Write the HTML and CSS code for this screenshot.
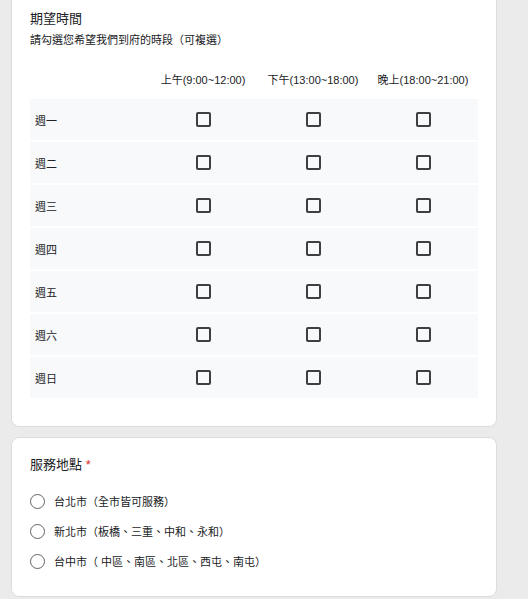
FILE: index.html
```html
<!DOCTYPE html>
<html lang="zh-Hant">
  <head>
    <meta charset="UTF-8" />
    <meta name="viewport" content="width=device-width, initial-scale=1.0" />
    <title>預約表單</title>
    <link rel="stylesheet" href="styles.css">
  </head>
  <body>
    <div class="form">
      <div class="card card-top">
        <div class="q-title">期望時間</div>
        <div class="q-desc">請勾選您希望我們到府的時段（可複選）</div>
        <div class="grid">
          <div class="head"></div>
          <div class="head">上午(9:00~12:00)</div>
          <div class="head">下午(13:00~18:00)</div>
          <div class="head">晚上(18:00~21:00)</div>
        </div>
        <div class="rows" id="rows"></div>
      </div>

      <div class="card card-place">
        <div class="q-title">服務地點 <span class="req">*</span></div>
        <div class="options">
          <label class="option"><span class="radio"></span>台北市（全市皆可服務）</label>
          <label class="option"><span class="radio"></span>新北市（板橋、三重、中和、永和）</label>
          <label class="option"><span class="radio"></span>台中市（ 中區、南區、北區、西屯、南屯）</label>
        </div>
      </div>
    </div>

    <script>
      const days = ["週一", "週二", "週三", "週四", "週五", "週六", "週日"];
      const rows = document.getElementById("rows");
      days.forEach((day) => {
        const row = document.createElement("div");
        row.className = "grid row";
        row.innerHTML = `
          <div class="day">${day}</div>
          <div class="cell"><span class="box"></span></div>
          <div class="cell"><span class="box"></span></div>
          <div class="cell"><span class="box"></span></div>
        `;
        rows.appendChild(row);
      });
    </script>
  </body>
</html>
```

FILE: styles.css
```css
body {
  margin: 0;
  background: #ebebeb;
  font-family: "Liberation Sans", "Noto Sans CJK TC", sans-serif;
  color: #202124;
}
.form {
  width: 486px;
  margin-left: 11px;
}
.card {
  background: #fff;
  border: 1px solid #dadce0;
  border-radius: 8px;
  padding: 0 18px;
}
.card-top {
  border-top: none;
  border-radius: 0 0 8px 8px;
  padding-top: 10px;
  padding-bottom: 28px;
}
.card-place {
  margin-top: 10px;
  padding-top: 18px;
  padding-bottom: 20px;
}
.q-title {
  font-size: 13px;
  line-height: 18px;
  margin-bottom: 3px;
}
.req {
  color: #d93025;
}
.q-desc {
  font-size: 11px;
  line-height: 18px;
  margin-bottom: 20px;
}
.grid {
  display: grid;
  grid-template-columns: 118px repeat(3, 110px);
  align-items: center;
}
.head {
  font-size: 11px;
  line-height: 22px;
  text-align: center;
  white-space: nowrap;
  margin-bottom: 8px;
}
.rows {
  display: flex;
  flex-direction: column;
  gap: 2px;
}
.row {
  height: 41px;
  background: #f8f9fa;
}
.day {
  font-size: 11px;
  padding-left: 5px;
}
.cell {
  display: flex;
  justify-content: center;
}
.box {
  width: 11px;
  height: 11px;
  border: 2px solid #3c4043;
  border-radius: 2px;
}
.options {
  margin-top: 12px;
}
.option {
  display: flex;
  align-items: center;
  gap: 9px;
  height: 30px;
  font-size: 11px;
}
.radio {
  width: 13px;
  height: 13px;
  border: 1.5px solid #5f6368;
  border-radius: 50%;
}
```
